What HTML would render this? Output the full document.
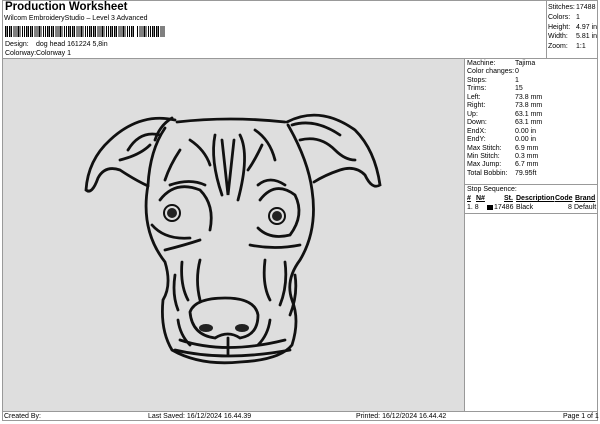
<!DOCTYPE html><html><head><style>
body{margin:0;width:600px;height:424px;background:#fff;position:relative;overflow:hidden;font-family:"Liberation Sans",sans-serif;color:#000}
.a{position:absolute;white-space:nowrap}
.s{font-size:7px}
</style></head><body>
<div class="a" style="left:2px;top:0;width:596px;height:421px;border:1px solid #999;box-sizing:border-box"></div>
<div class="a" style="left:5px;top:1px;font-size:11.5px;font-weight:bold">Production Worksheet</div>
<div class="a s" style="left:4px;top:15px">Wilcom EmbroideryStudio – Level 3 Advanced</div>
<div class="a" style="left:5px;top:26px;width:160px;height:11px;background:repeating-linear-gradient(90deg,#000 0 1.3px,#fff 1.3px 2px,#000 2px 3px,#fff 3px 4.2px)"></div>
<div class="a" style="left:134px;top:26px;width:3px;height:11px;background:#fff"></div>
<div class="a s" style="left:5px;top:41px">Design:</div><div class="a s" style="left:36px;top:41px">dog head 161224 5,8in</div>
<div class="a s" style="left:5px;top:50px">Colorway:</div><div class="a s" style="left:36px;top:50px">Colorway 1</div>
<div class="a" style="left:2px;top:58px;width:596px;border-top:1px solid #999"></div>
<div class="a" style="left:546px;top:0;height:58px;border-left:1px solid #999"></div>
<div class="a s" style="left:548px;top:3px;line-height:9.8px">Stitches:<br>Colors:<br>Height:<br>Width:<br>Zoom:</div>
<div class="a s" style="left:576px;top:3px;line-height:9.8px">17488<br>1<br>4.97 in<br>5.81 in<br>1:1</div>
<div class="a" style="left:3px;top:59px;width:461px;height:352px;background:#dedede"></div>
<div class="a" style="left:464px;top:58px;height:354px;border-left:1px solid #999"></div>
<div class="a s" style="left:467px;top:60px;line-height:8.45px">Machine:<br>Color changes:<br>Stops:<br>Trims:<br>Left:<br>Right:<br>Up:<br>Down:<br>EndX:<br>EndY:<br>Max Stitch:<br>Min Stitch:<br>Max Jump:<br>Total Bobbin:</div>
<div class="a s" style="left:515px;top:60px;line-height:8.45px">Tajima<br>0<br>1<br>15<br>73.8 mm<br>73.8 mm<br>63.1 mm<br>63.1 mm<br>0.00 in<br>0.00 in<br>6.9 mm<br>0.3 mm<br>6.7 mm<br>79.95ft</div>
<div class="a" style="left:465px;top:184px;width:133px;border-top:1px solid #999"></div>
<div class="a s" style="left:467px;top:186px">Stop Sequence:</div>
<div class="a s" style="left:467px;top:195px;font-weight:bold;text-decoration:underline">#</div>
<div class="a s" style="left:476px;top:195px;font-weight:bold;text-decoration:underline">N#</div>
<div class="a s" style="left:504px;top:195px;font-weight:bold;text-decoration:underline">St.</div>
<div class="a s" style="left:516px;top:195px;font-weight:bold;text-decoration:underline">Description</div>
<div class="a s" style="left:555px;top:195px;font-weight:bold;text-decoration:underline">Code</div>
<div class="a s" style="left:575px;top:195px;font-weight:bold;text-decoration:underline">Brand</div>
<div class="a s" style="left:467px;top:204px">1. 8</div>
<div class="a" style="left:487px;top:205px;width:6px;height:5px;background:#000"></div>
<div class="a s" style="left:494px;top:204px">17486</div>
<div class="a s" style="left:516px;top:204px">Black</div>
<div class="a s" style="left:568px;top:204px">8</div>
<div class="a s" style="left:574px;top:204px">Default</div>
<div class="a" style="left:465px;top:213px;width:133px;border-top:1px solid #999"></div>
<div class="a" style="left:2px;top:411px;width:596px;border-top:1px solid #999"></div>
<div class="a s" style="left:4px;top:413px">Created By:</div>
<div class="a s" style="left:148px;top:413px">Last Saved: 16/12/2024 16.44.39</div>
<div class="a s" style="left:356px;top:413px">Printed: 16/12/2024 16.44.42</div>
<div class="a s" style="left:563px;top:413px">Page 1 of 1</div>
<svg class="a" style="left:0;top:0" width="600" height="424" fill="none" stroke="#111" stroke-width="2.8" stroke-linecap="round">
<path d="M177,122 Q230,116 285,122"/>
<path d="M165,128 Q150,150 148,185 Q140,230 165,262 Q172,285 163,300 Q160,330 172,350 Q200,366 240,362 Q280,360 292,345 Q300,320 292,300 Q285,280 300,260 Q318,230 312,190 Q308,160 288,125"/>
<path d="M175,120 Q140,112 110,140 Q88,160 86,190 Q92,195 98,178 Q105,165 120,170 Q135,180 148,186"/>
<path d="M160,135 Q140,130 128,150 M150,145 Q140,155 120,160 M172,118 Q160,125 155,140"/>
<path d="M287,122 Q320,105 355,130 Q375,150 380,185 Q372,190 365,175 Q355,165 340,170 Q325,175 314,182"/>
<path d="M300,140 Q320,135 335,150 Q345,160 355,160 M292,125 Q315,118 340,135"/>
<path d="M222,140 L228,195 L234,140 M215,135 Q210,160 222,195 M240,135 Q250,155 238,200"/>
<path d="M190,140 Q205,150 210,165 M255,130 Q270,140 275,160 M180,150 Q170,165 165,180 M262,145 Q255,160 248,170"/>
<path d="M160,200 Q175,180 200,190 Q215,205 210,230 M152,225 Q165,240 190,238 M170,185 Q190,178 205,185"/>
<path d="M260,200 Q275,180 295,195 Q305,215 290,235 Q270,240 258,228 M258,185 Q270,175 285,185"/>
<path d="M165,250 Q185,245 200,240 M250,245 Q275,250 300,245"/>
<path d="M182,262 Q180,285 188,300 M200,260 Q195,280 200,300 M265,260 Q262,285 270,300 M285,262 Q288,285 280,305 M175,275 Q172,295 178,310 M295,275 Q298,295 290,315"/>
<path d="M190,312 Q195,298 225,298 Q255,298 258,315 Q258,335 240,338 Q228,330 215,338 Q192,335 190,312 Z"/>
<path d="M180,340 Q225,355 285,340 M175,350 Q225,362 290,350 M178,320 Q180,335 190,345 M270,320 Q268,335 258,345"/>
<path d="M228,338 L228,355"/>
</svg>
<svg class="a" style="left:0;top:0" width="600" height="424">
<circle cx="172" cy="213" r="8" fill="none" stroke="#111" stroke-width="2"/><circle cx="172" cy="213" r="5" fill="#222"/>
<circle cx="277" cy="216" r="8" fill="none" stroke="#111" stroke-width="2"/><circle cx="277" cy="216" r="5" fill="#222"/>
<ellipse cx="206" cy="328" rx="7" ry="4" fill="#222"/><ellipse cx="242" cy="328" rx="7" ry="4" fill="#222"/>
</svg>
</body></html>
